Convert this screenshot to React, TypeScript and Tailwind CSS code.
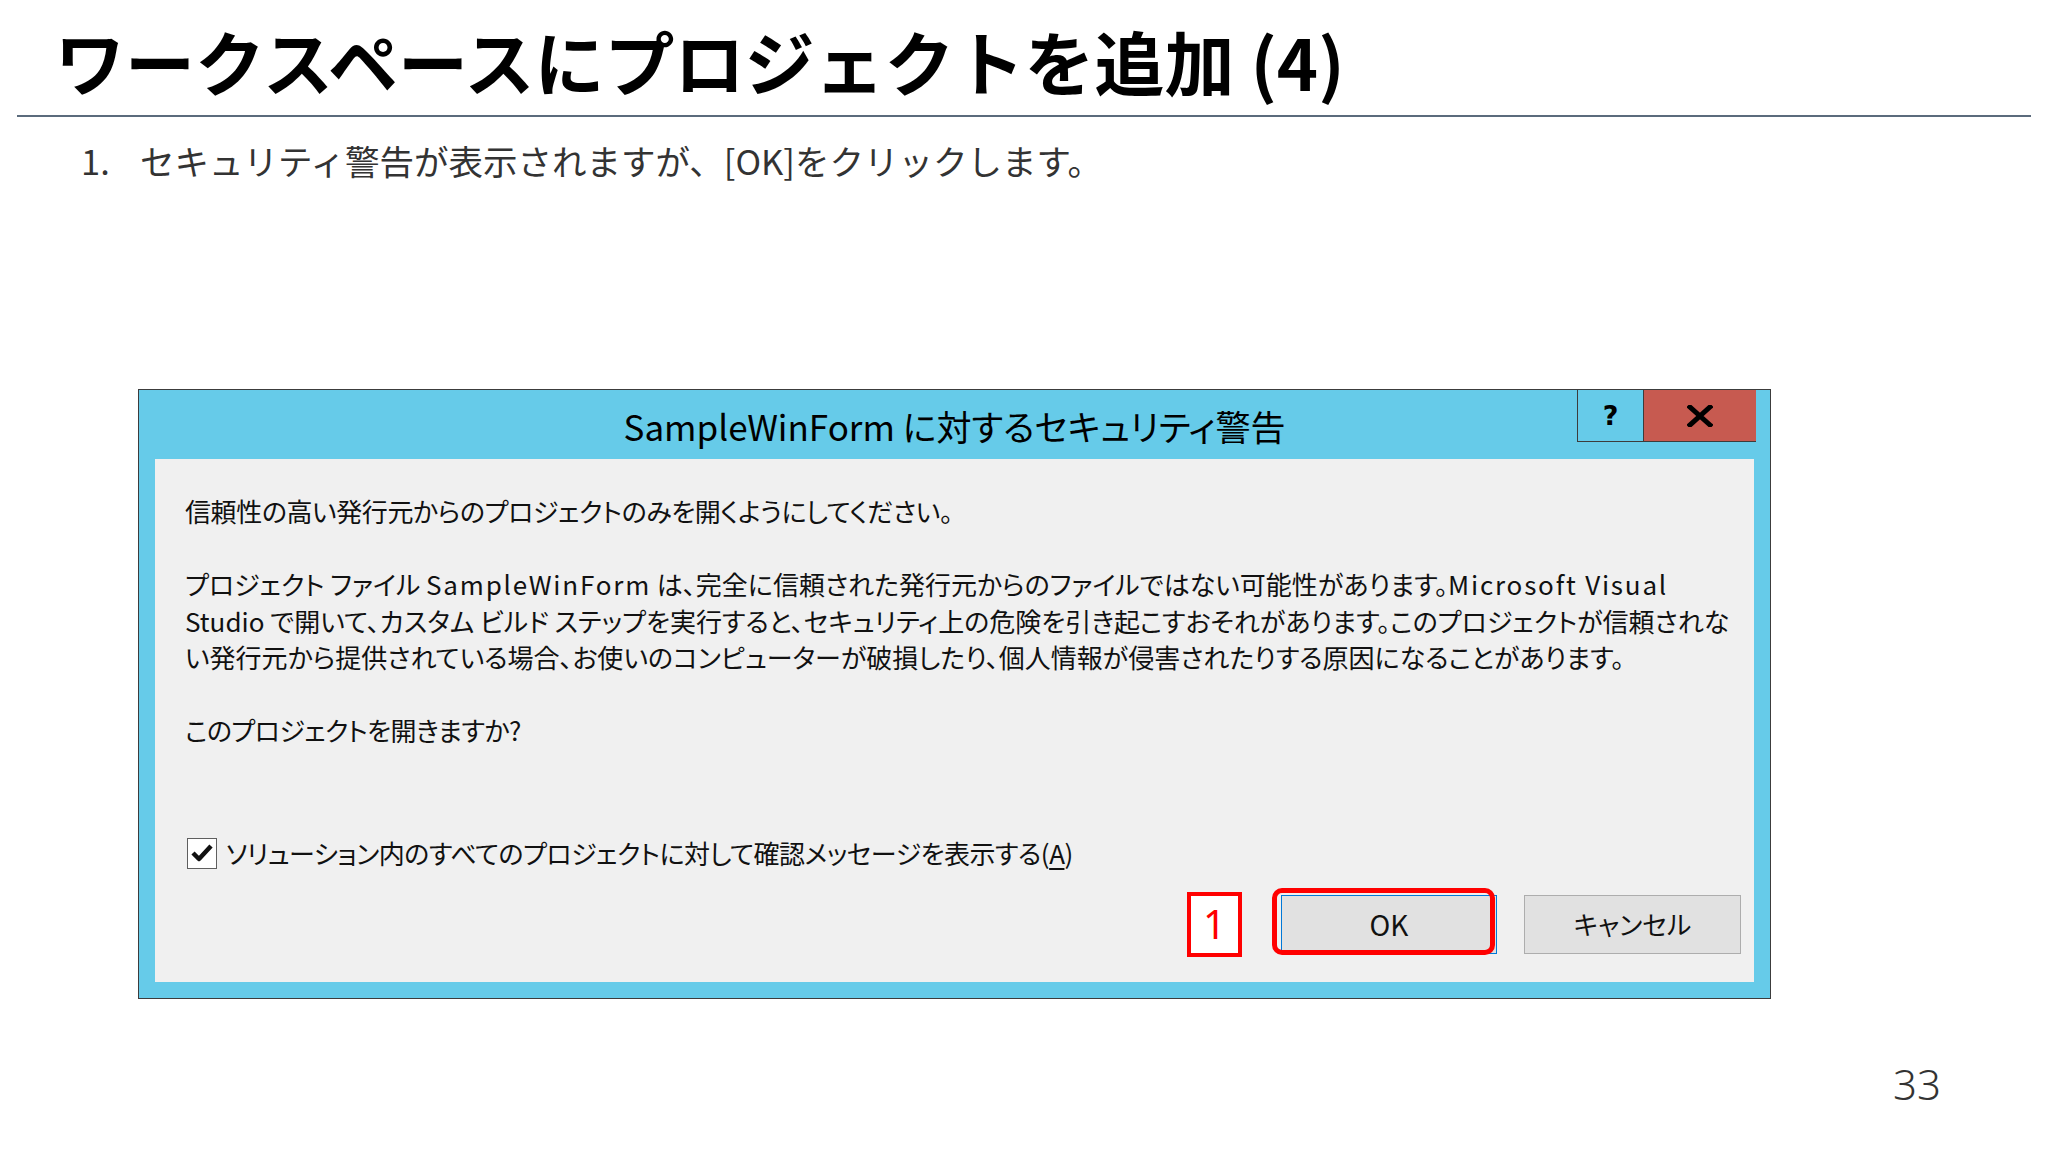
import React from 'react';

const jp = "font-['Noto_Sans_CJK_JP','Noto_Sans',sans-serif]";
const palt = "[font-feature-settings:'palt']";

const TitleBar: React.FC = () => (
  <div className="relative h-[69px] flex justify-center items-center">
    <span className={`${jp} ${palt} text-[35px] leading-none text-black mt-[1px]`}>
      SampleWinForm に対するセキュリティ警告
    </span>
    <div className="absolute right-[14px] top-0 flex h-[52px] border-l border-b border-[#3c3c3c]">
      <div className="w-[66px] h-full flex items-center justify-center border-r border-[#3c3c3c]">
        <span className="font-['DejaVu_Sans',sans-serif] font-bold text-[27px] leading-none text-black">?</span>
      </div>
      <div className="w-[112px] h-full bg-[#c75a50] flex items-center justify-center">
        <svg width="26" height="22" viewBox="0 0 26 22">
          <path d="M3 2 L23 20 M23 2 L3 20" stroke="#000" strokeWidth="5" strokeLinecap="square" />
        </svg>
      </div>
    </div>
  </div>
);

const Checkbox: React.FC = () => (
  <div className="w-[30px] h-[31px] bg-white border border-[#5f5f5f] flex items-center justify-center">
    <svg width="22" height="20" viewBox="0 0 22 20">
      <path d="M2 10 L8 16 L20 3" fill="none" stroke="#111" strokeWidth="4.5" strokeLinejoin="round" />
    </svg>
  </div>
);

const DialogBody: React.FC = () => (
  <div className={`flex-1 mx-[16px] mb-[16px] bg-[#f0f0f0] flex flex-col pl-[30px] pr-[13px] ${jp} ${palt} text-[#111]`}>
    <div className="text-[26px] leading-[36.5px] pt-[34px] whitespace-nowrap">
      <p className="tracking-[-0.4px]">信頼性の高い発行元からのプロジェクトのみを開くようにしてください。</p>
      <p className="mt-[36.5px]">
        プロジェクト ファイル <span className="tracking-[1.8px]">SampleWinForm</span> は、完全に信頼された発行元からのファイルではない可能性があります。
        <span className="tracking-[1.8px]">Microsoft Visual</span>
        <br />
        Studio で開いて、カスタム ビルド ステップを実行すると、セキュリティ上の危険を引き起こすおそれがあります。このプロジェクトが信頼されな
        <br />
        い発行元から提供されている場合、お使いのコンピューターが破損したり、個人情報が侵害されたりする原因になることがあります。
      </p>
      <p className="mt-[36.5px] tracking-[-0.6px]">このプロジェクトを開きますか?</p>
    </div>
    <div className="mt-[89px] flex items-center gap-[9px] ml-[2px]">
      <Checkbox />
      <span className="text-[26px] leading-none tracking-[-0.5px]">
        ソリューション内のすべてのプロジェクトに対して確認メッセージを表示する(<span className="underline underline-offset-4">A</span>)
      </span>
    </div>
    <div className="mt-[23px] flex justify-end items-center">
      <div className="w-[55px] h-[65px] bg-white border-[4px] border-[#ff0000] flex items-center justify-center mr-[39px]">
        <span className="font-['Noto_Sans',sans-serif] text-[40px] leading-none text-[#ff0000]">1</span>
      </div>
      <div className="relative">
        <button className="w-[216px] h-[59px] bg-[#e1e1e1] border border-[#0078d7] text-[28px] leading-none text-[#111]">
          OK
        </button>
        <div className="absolute left-[-9px] top-[-7px] w-[223px] h-[67px] border-[5px] border-[#ff0000] rounded-[10px]" />
      </div>
      <button className="ml-[27px] w-[217px] h-[59px] bg-[#e1e1e1] border border-[#adadad] text-[26px] leading-none text-[#111]">
        キャンセル
      </button>
    </div>
  </div>
);

export default function App() {
  return (
    <div className="w-[2048px] h-[1152px] bg-white overflow-hidden">
      <div className="mx-[17px] pt-[26px] pb-[19px] border-b-2 border-[#5b6b7c]">
        <h1 className={`${jp} pl-[38px] text-[70px] font-bold leading-none text-black whitespace-nowrap`}>
          ワークスペースにプロジェクトを追加 (4)
        </h1>
      </div>
      <div className={`${jp} mt-[26px] ml-[81px] flex text-[34.5px] leading-[35px] text-[#333] whitespace-nowrap`}>
        <span className="w-[59px]">1.</span>
        <span>セキュリティ警告が表示されますが、[OK]をクリックします。</span>
      </div>
      <div className="ml-[138px] mt-[211px] w-[1633px] h-[610px] border border-[#3c3c3c] bg-[#66cbe9] flex flex-col">
        <TitleBar />
        <DialogBody />
      </div>
      <div className="flex justify-end pr-[107px] mt-[64px]">
        <span className="font-['Noto_Sans',sans-serif] font-light text-[42px] leading-none text-[#333]">33</span>
      </div>
    </div>
  );
}
